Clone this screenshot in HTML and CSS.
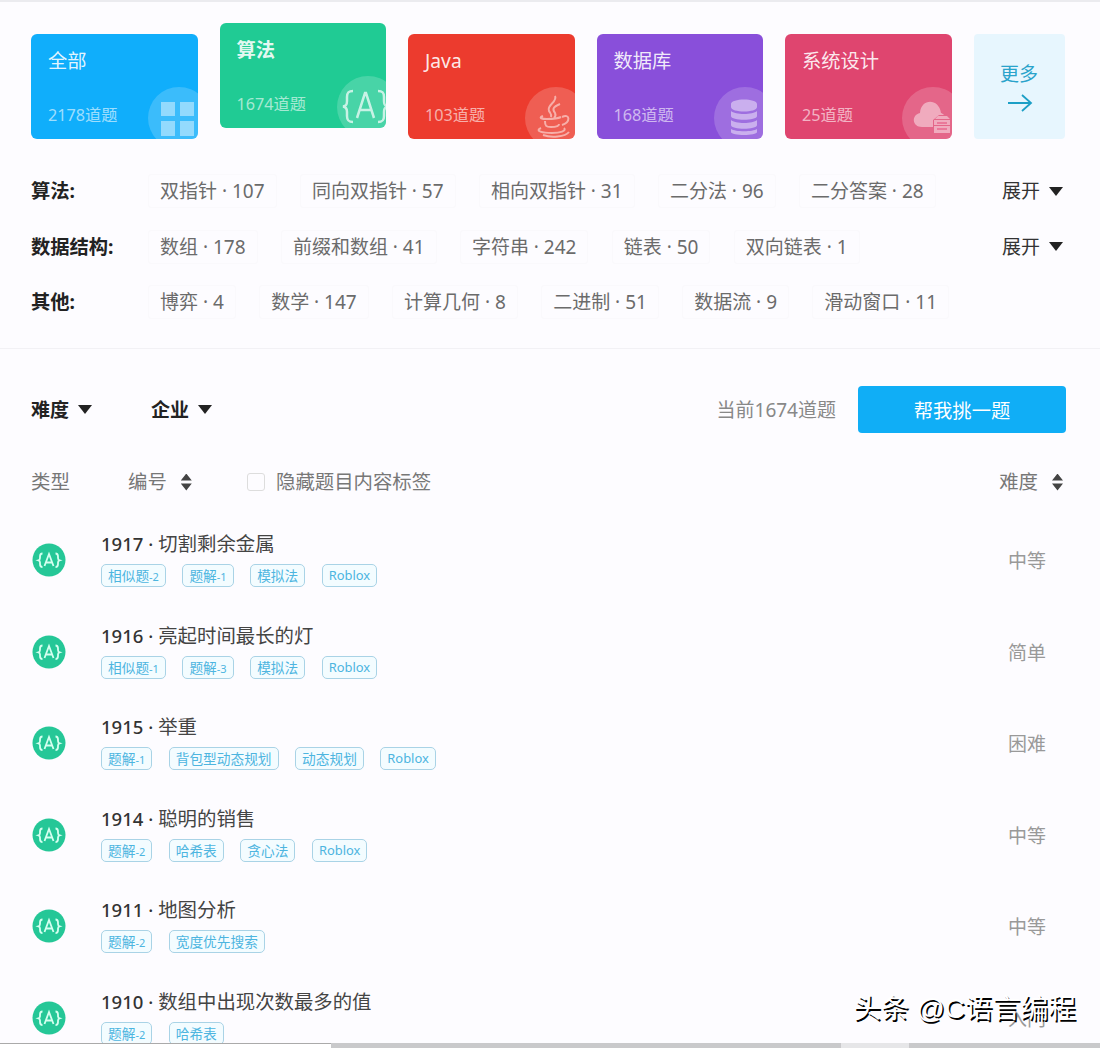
FILE: index.html
```
<!DOCTYPE html>
<html lang="zh-CN">
<head>
  <meta charset="UTF-8" />
  <meta name="viewport" content="width=device-width, initial-scale=1.0" />
  <title>题库</title>
  <link rel="stylesheet" href="styles.css">
</head>
<body>
  <div class="page">
    <div class="cards">
      <div class="card blue">
        <h2>全部</h2>
        <p>2178道题</p>
        <svg class="card-icon" viewBox="0 0 62 62">
          <circle cx="31" cy="31" r="31" />
          <path class="shape" d="M13 15h14v14H13zM32 15h14v14H32zM13 34h14v15H13zM32 34h14v15H32z" />
        </svg>
      </div>
      <div class="card green active">
        <h2>算法</h2>
        <p>1674道题</p>
        <svg class="card-icon" viewBox="0 0 62 62">
          <circle cx="31" cy="31" r="31" />
          <path class="line" d="M16 15c-5 0-6 2-6 6v4c0 4-1 5-4 5.500 3 .5 4 2 4 5.500v4c0 4 1 6 6 6M20 42l8-25h1l8 25M23 34h11M41 15c5 0 6 2 6 6v4c0 4 1 5 4 5.500-3 .5-4 2-4 5.500v4c0 4-1 6-6 6" />
        </svg>
      </div>
      <div class="card red">
        <h2>Java</h2>
        <p>103道题</p>
        <svg class="card-icon" viewBox="0 0 62 62">
          <circle cx="31" cy="31" r="31" />
          <path class="thin" d="M30 9c3 6-9 9-6 15 1 2 3 3 2 6M35 17c-7 3-8 5-5 9 1 2 0 4-1 5M18 29c-5 2-1 3 4 3 6 0 11-.5 14-2M20 34c0 5 1 6 6 6s8-1 8-3M37 30c8-4 9 5 0 8M16 41c-7 3 2 5 11 5 8 0 15-2 12-5M18 48c8 3 22 2 26-3" />
        </svg>
      </div>
      <div class="card purple">
        <h2>数据库</h2>
        <p>168道题</p>
        <svg class="card-icon" viewBox="0 0 62 62">
          <circle cx="31" cy="31" r="31" />
          <path class="shape" d="M17 17c0-6 26-6 26 0v3c0 6-26 6-26 0zM17 24c4 4 22 4 26 0v5c0 5-26 5-26 0zM17 33c4 4 22 4 26 0v5c0 5-26 5-26 0zM17 42c4 3 22 3 26 0v3c0 4-26 4-26 0z" />
        </svg>
      </div>
      <div class="card pink">
        <h2>系统设计</h2>
        <p>25道题</p>
        <svg class="card-icon" viewBox="0 0 62 62">
          <circle cx="31" cy="31" r="31" />
          <path class="shape" d="M20 40c-10 0-11-12-2-14 1-15 19-15 21 0 1 0 2 1 3 2h-5l-6 5v7z" />
          <path class="shape" d="M33 32l3-3h9l3 3zM32 33h16v5H32zM32 39h16v7H32z" />
          <path class="thin dim" d="M35 36h10M35 42h10" />
        </svg>
      </div>
      <div class="more">
        <span>更多</span>
        <svg width="26" height="20" viewBox="0 0 26 20"><path d="M1 10h23M15 2l9 8-9 8" /></svg>
      </div>
    </div>

    <div class="topics">
      <div class="topic-row">
        <strong>算法:</strong>
        <div class="topic-list">
          <span>双指针 · 107</span>
          <span>同向双指针 · 57</span>
          <span>相向双指针 · 31</span>
          <span>二分法 · 96</span>
          <span>二分答案 · 28</span>
        </div>
        <div class="expand">展开 <i class="caret"></i></div>
      </div>
      <div class="topic-row">
        <strong>数据结构:</strong>
        <div class="topic-list">
          <span>数组 · 178</span>
          <span>前缀和数组 · 41</span>
          <span>字符串 · 242</span>
          <span>链表 · 50</span>
          <span>双向链表 · 1</span>
        </div>
        <div class="expand">展开 <i class="caret"></i></div>
      </div>
      <div class="topic-row">
        <strong>其他:</strong>
        <div class="topic-list">
          <span>博弈 · 4</span>
          <span>数学 · 147</span>
          <span>计算几何 · 8</span>
          <span>二进制 · 51</span>
          <span>数据流 · 9</span>
          <span>滑动窗口 · 11</span>
        </div>
      </div>
    </div>

    <div class="filters">
      <div class="filter">难度 <i class="caret"></i></div>
      <div class="filter">企业 <i class="caret"></i></div>
      <span class="total">当前1674道题</span>
      <button class="pick">帮我挑一题</button>
    </div>

    <div class="list-head">
      <span class="col-type">类型</span>
      <span class="col-id">编号 <i class="sorter"></i></span>
      <label><i class="checkbox"></i>隐藏题目内容标签</label>
      <span class="col-level">难度 <i class="sorter"></i></span>
    </div>

    <!-- shared badge for algorithm problems -->
    <svg class="defs">
      <symbol id="algo" viewBox="0 0 34 34">
        <circle cx="17" cy="17" r="16.500" />
        <path d="M10.500 10.500c-2 0-2.500 1-2.500 3v1.500c0 1.500-.5 2-1.500 2.300 1 .3 1.500 1 1.500 2.300v1.500c0 2 .5 3 2.500 3M12.500 23l4.500-12 4.500 12M14.500 19.500h5M23.500 10.500c2 0 2.500 1 2.500 3v1.500c0 1.500.5 2 1.500 2.300-1 .3-1.500 1-1.500 2.300v1.500c0 2-.5 3-2.500 3" />
      </symbol>
    </svg>

    <div class="problems">
      <div class="problem">
        <svg class="badge"><use href="#algo" /></svg>
        <div class="info">
          <h3><b>1917 ·</b> 切割剩余金属</h3>
          <div class="tags"><span>相似题<small>-2</small></span><span>题解<small>-1</small></span><span>模拟法</span><span class="company">Roblox</span></div>
        </div>
        <span class="level">中等</span>
      </div>
      <div class="problem">
        <svg class="badge"><use href="#algo" /></svg>
        <div class="info">
          <h3><b>1916 ·</b> 亮起时间最长的灯</h3>
          <div class="tags"><span>相似题<small>-1</small></span><span>题解<small>-3</small></span><span>模拟法</span><span class="company">Roblox</span></div>
        </div>
        <span class="level">简单</span>
      </div>
      <div class="problem">
        <svg class="badge"><use href="#algo" /></svg>
        <div class="info">
          <h3><b>1915 ·</b> 举重</h3>
          <div class="tags"><span>题解<small>-1</small></span><span>背包型动态规划</span><span>动态规划</span><span class="company">Roblox</span></div>
        </div>
        <span class="level">困难</span>
      </div>
      <div class="problem">
        <svg class="badge"><use href="#algo" /></svg>
        <div class="info">
          <h3><b>1914 ·</b> 聪明的销售</h3>
          <div class="tags"><span>题解<small>-2</small></span><span>哈希表</span><span>贪心法</span><span class="company">Roblox</span></div>
        </div>
        <span class="level">中等</span>
      </div>
      <div class="problem">
        <svg class="badge"><use href="#algo" /></svg>
        <div class="info">
          <h3><b>1911 ·</b> 地图分析</h3>
          <div class="tags"><span>题解<small>-2</small></span><span>宽度优先搜索</span></div>
        </div>
        <span class="level">中等</span>
      </div>
      <div class="problem">
        <svg class="badge"><use href="#algo" /></svg>
        <div class="info">
          <h3><b>1910 ·</b> 数组中出现次数最多的值</h3>
          <div class="tags"><span>题解<small>-2</small></span><span>哈希表</span></div>
        </div>
        <span class="level">入门</span>
      </div>
    </div>

    <div class="scrollbar"><i class="left"></i><i class="mid"></i><i class="thumb"></i></div>
    <div class="watermark">头条 @C语言编程</div>
  </div>
</body>
</html>
```
FILE: styles.css
```
* {
  box-sizing: border-box;
}

body {
  margin: 0;
  font-family: "Noto Sans", "Noto Sans CJK SC", sans-serif;
  font-size: 19px;
  line-height: 28px;
  color: #6b6b6b;
  background-color: #fdfcff;
}

h2, h3, p {
  margin: 0;
  font-weight: 400;
}

.page {
  position: relative;
  display: flex;
  flex-direction: column;
  height: 1048px;
  overflow: hidden;
  border-top: 2px solid #ebebef;
}

/* category cards */
.cards {
  display: flex;
  gap: 22px;
  height: 105px;
  margin: 32px 35px 0 31px;
}

.card {
  position: relative;
  width: 166.500px;
  height: 105px;
  padding: 13px 17px;
  border-radius: 6px;
  overflow: hidden;
  color: rgba(255, 255, 255, 0.9);
}

.card.active {
  margin-top: -11px;
}

.card h2 {
  font-size: 19.300px;
}

.card.active h2 {
  font-weight: 700;
}

.card p {
  margin-top: 26px;
  font-size: 16.200px;
  color: rgba(255, 255, 255, 0.6);
}

.blue { background-color: #10aefb; }
.green { background-color: #20cb94; }
.red { background-color: #ec3b2e; }
.purple { background-color: #894fda; }
.pink { background-color: #df456f; }

.card-icon {
  position: absolute;
  left: 117px;
  top: 53px;
  width: 62px;
  height: 62px;
  fill: rgba(255, 255, 255, 0.18);
}

.card-icon .shape {
  fill: rgba(255, 255, 255, 0.45);
}

.card-icon .line,
.card-icon .thin {
  fill: none;
  stroke: rgba(255, 255, 255, 0.7);
  stroke-width: 2.500;
}

.card-icon .thin {
  stroke: rgba(255, 255, 255, 0.5);
  stroke-width: 2;
}

.card-icon .dim {
  stroke: #e86a8e;
  stroke-width: 1.500;
}

.more {
  display: flex;
  flex-direction: column;
  align-items: center;
  width: 91px;
  padding-top: 26px;
  border-radius: 4px;
  background-color: #e7f6fe;
  color: #2aa3cb;
}

.more svg {
  margin-top: 5px;
  margin-left: 2px;
  fill: none;
  stroke: #1c9fc6;
  stroke-width: 1.800;
}

/* topics */
.topics {
  height: 210px;
  padding: 35px 35px 0 31px;
  border-bottom: 1px solid #f2f1f5;
}

.topic-row {
  display: flex;
  align-items: center;
  height: 34px;
  margin-bottom: 21.500px;
}

.topic-row strong {
  width: 117px;
  font-size: 19.300px;
  color: #222;
}

.topic-list {
  display: flex;
  flex: 1;
  gap: 23.300px;
  white-space: nowrap;
}

.topic-list span {
  padding: 2px 11px;
  border: 1px solid #faf9fc;
  border-radius: 3px;
}

.expand,
.filter {
  display: flex;
  align-items: center;
  color: #333;
}

.caret {
  margin-left: 9px;
  border: 7px solid transparent;
  border-top: 9px solid #222;
  border-bottom: 0;
}

.expand .caret {
  margin-right: 2px;
}

/* filters */
.filters {
  display: flex;
  align-items: center;
  height: 47px;
  margin: 37px 34px 0 31px;
}

.filter {
  width: 120px;
  font-weight: 700;
  color: #222;
}

.total {
  margin-left: auto;
  margin-right: 22px;
  color: #888;
}

.pick {
  width: 208px;
  height: 47px;
  padding: 0;
  border: none;
  border-radius: 4px;
  background-color: #10aef6;
  color: #fff;
  font-family: inherit;
  font-size: 19.300px;
}

.list-head {
  display: flex;
  align-items: center;
  height: 28px;
  margin: 35px 35px 0 31px;
  font-size: 19.400px;
  color: #777;
}

.col-type {
  width: 97px;
}

.col-id,
.col-level {
  display: flex;
  align-items: center;
  width: 119px;
}

.col-level {
  width: auto;
  margin-left: auto;
}

.sorter {
  width: 11px;
  height: 17px;
  margin: 0 2px 0 14px;
  background-color: #444;
  clip-path: polygon(50% 0, 100% 41%, 0 41%, 0 59%, 100% 59%, 50% 100%, 0 59%, 0 41%);
}

.list-head label {
  display: flex;
  align-items: center;
}

.checkbox {
  width: 18px;
  height: 18px;
  margin-right: 11px;
  border: 1px solid #ddd;
  border-radius: 3px;
}

/* problem list */
.defs {
  position: absolute;
  width: 0;
  height: 0;
}

.problems {
  flex: 1;
  margin: 34px 54px 0 32px;
  overflow: hidden;
}

.problem {
  display: flex;
  height: 91.600px;
}

.badge {
  width: 34px;
  height: 34px;
  margin: 13px 35px 0 0;
  fill: #25c797;
}

#algo path {
  fill: none;
  stroke: #d5fff0;
  stroke-width: 1.800;
}

.info {
  flex: 1;
}

.info h3 {
  font-size: 19.400px;
  color: #444;
}

.info h3 b {
  font-size: 18.500px;
  font-weight: 500;
  color: #333;
}

.tags {
  display: flex;
  gap: 16.500px;
  margin-top: 6px;
}

.tags span {
  height: 23px;
  padding: 0 6px;
  border: 1px solid #a9d3e6;
  border-radius: 5px;
  background-color: #f3fcff;
  color: #4db5df;
  font-size: 13.700px;
  line-height: 21px;
}

.tags small {
  font-size: 11px;
}

.tags .company {
  font-size: 12.900px;
}

.level {
  margin-top: 17px;
  color: #999;
}

.scrollbar {
  display: flex;
  height: 5px;
  background-color: #c9c9cb;
}

.scrollbar .left {
  width: 331px;
  border-top: 1px solid #aaa;
  background-color: #fff;
}

.scrollbar .mid {
  width: 510px;
}

.scrollbar .thumb {
  width: 68px;
  background-color: #e6e6e8;
}

.watermark {
  position: absolute;
  right: 24px;
  bottom: 19px;
  font-family: "Liberation Sans", "Noto Sans CJK SC", sans-serif;
  font-size: 27.800px;
  line-height: 40px;
  color: #fff;
  text-shadow: 1.500px 1.500px 0 #000;
}
```
